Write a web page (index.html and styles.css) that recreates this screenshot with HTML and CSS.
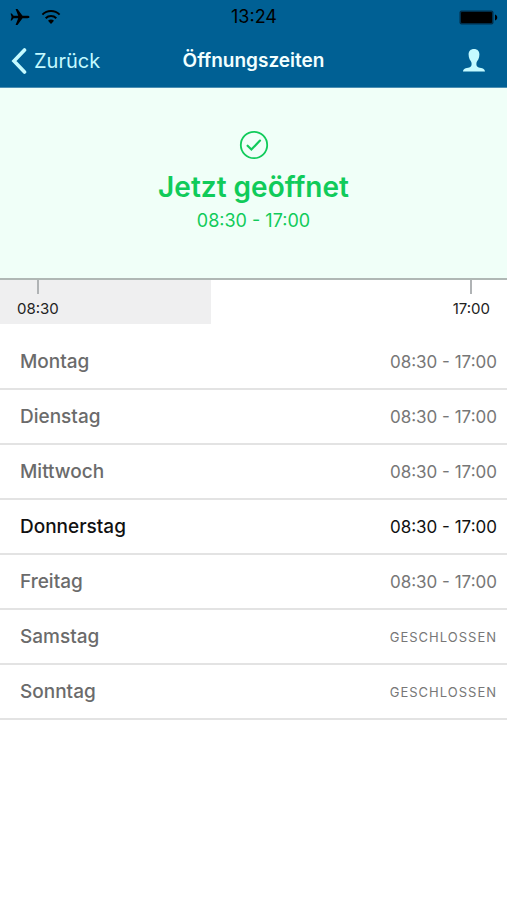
FILE: index.html
```html
<!DOCTYPE html>
<html lang="de">
<head>
<meta charset="utf-8">
<meta name="viewport" content="width=device-width, initial-scale=1">
<title>Öffnungszeiten</title>
<link rel="stylesheet" href="styles.css">
</head>
<body>
<header class="header">
  <div class="status">
    <div class="status-left">
      <svg width="20" height="18" viewBox="0 0 20 18" aria-hidden="true"><path d="M19.5 9c0-.8-1-1.200-2-1.200h-5L7.500 1H5.600l2.600 6.800H3.600L1.800 5.500H.6L1.600 9 .6 12.500h1.200l1.800-2.300h4.600L5.600 17h1.900l5-6.800h5c1 0 2-.4 2-1.200z"/></svg>
      <svg width="20" height="16" viewBox="0 0 20 16" aria-hidden="true"><g fill="none" stroke="#000" stroke-width="2"><path d="M1.400 5.600a12.200 12.200 0 0 1 17.200 0"/><path d="M4.700 9.200a7.500 7.500 0 0 1 10.600 0"/></g><path d="M10 15l-3-3.200a4.200 4.200 0 0 1 6 0z"/></svg>
    </div>
    <time class="clock">13:24</time>
    <svg class="battery" width="39" height="15" viewBox="0 0 39 15" aria-hidden="true"><rect x=".5" y=".5" width="34" height="14" rx="2" fill="#002d49"/><rect x="2" y="2" width="31" height="11" rx="1"/><path d="M36 4.500c3 1 3 5 0 6z"/></svg>
  </div>
  <nav class="nav">
    <a class="back" href="#">
      <svg width="16" height="26" viewBox="0 0 16 26" aria-hidden="true"><path d="M13.500 2L3 13l10.500 11" fill="none" stroke="currentColor" stroke-width="3.600" stroke-linecap="round" stroke-linejoin="miter"/></svg>
      <span>Zurück</span>
    </a>
    <h1 class="title">Öffnungszeiten</h1>
    <button class="profile" type="button" aria-label="Profil">
      <svg width="22" height="23" viewBox="0 0 22 23" aria-hidden="true"><path d="M11 0C7.600 0 5.600 2.200 5.600 5.500c0 1.800.4 3.300 1 4.800.4 1.100 1.600 2 1.900 3.400.3 1.800.1 3.400-1.300 4.200C5 19.100 0 18.800 0 22.500h22c0-3.700-5-3.400-7.200-4.600-1.400-.8-1.600-2.400-1.300-4.200.3-1.400 1.500-2.300 1.900-3.400.6-1.500 1-3 1-4.800C16.400 2.200 14.400 0 11 0z" fill="currentColor"/></svg>
    </button>
  </nav>
</header>
<main>
  <section class="hero">
    <svg width="30" height="30" viewBox="0 0 30 30" fill="none" stroke="currentColor" aria-hidden="true"><circle cx="15" cy="15" r="13.200" stroke-width="1.800"/><path d="M8.600 15.700l3.800 3.800 8.600-8.900" stroke-width="2.200" stroke-linecap="round"/></svg>
    <h2 class="hero-title">Jetzt geöffnet</h2>
    <p class="hero-time">08:30 - 17:00</p>
  </section>
  <section class="timeline" aria-label="Tagesverlauf">
    <div class="elapsed"><time class="mark">08:30</time></div>
    <div class="remaining"><time class="mark">17:00</time></div>
  </section>
  <ul class="days">
    <li class="day"><span class="name">Montag</span><span class="hours">08:30 - 17:00</span></li>
    <li class="day"><span class="name">Dienstag</span><span class="hours">08:30 - 17:00</span></li>
    <li class="day"><span class="name">Mittwoch</span><span class="hours">08:30 - 17:00</span></li>
    <li class="day today"><span class="name">Donnerstag</span><span class="hours">08:30 - 17:00</span></li>
    <li class="day"><span class="name">Freitag</span><span class="hours">08:30 - 17:00</span></li>
    <li class="day"><span class="name">Samstag</span><span class="closed">GESCHLOSSEN</span></li>
    <li class="day"><span class="name">Sonntag</span><span class="closed">GESCHLOSSEN</span></li>
  </ul>
</main>
</body>
</html>
```
FILE: styles.css
```css
* { box-sizing: border-box; margin: 0; padding: 0; }

body {
  background: #fff;
  color: #000;
  font-family: Inter, "Liberation Sans", sans-serif;
}

svg { display: block; }

.header {
  background: #006094;
  border-bottom: 1px solid #4c8fb3;
}

.status,
.nav {
  display: grid;
  grid-template-columns: 1fr auto 1fr;
  align-items: center;
}

.status { height: 34px; padding: 0 9px 0 10px; }
.status-left { display: flex; align-items: center; gap: 11px; }
.clock { font-size: 18px; line-height: 24px; }
.battery { justify-self: end; }

.nav { height: 53px; padding: 0 11px; }

.back {
  display: flex;
  align-items: center;
  gap: 7px;
  color: #c4faff;
  font-size: 20px;
  line-height: 24px;
  text-decoration: none;
}

.title {
  color: #f2ffff;
  font-size: 19px;
  font-weight: 600;
  line-height: 24px;
}

.profile {
  justify-self: end;
  padding: 0 11px;
  background: none;
  border: 0;
  color: #c4faff;
}

.hero {
  display: flex;
  flex-direction: column;
  align-items: center;
  padding: 42px 16px 45px;
  background: #f0fff8;
  border-bottom: 2px solid #b0b8b5;
  color: #10cb5a;
}

.hero-title {
  margin-top: 10px;
  font-size: 28px;
  font-weight: 600;
  line-height: 34px;
}

.hero-time {
  margin-top: 5px;
  font-size: 18px;
  line-height: 24px;
}

.timeline {
  display: grid;
  grid-template-columns: 5fr 7fr;
  height: 44px;
}

.elapsed,
.remaining {
  display: flex;
  align-items: flex-start;
  padding: 0 17px;
}

.elapsed { background: #efeff0; }
.remaining { justify-content: flex-end; }

.mark {
  display: flex;
  flex-direction: column;
  align-items: center;
  gap: 5px;
  color: #222;
  font-size: 15px;
  line-height: 20px;
}

.mark::before {
  content: "";
  width: 2px;
  height: 14px;
  background: #b0b3b5;
}

.days { margin-top: 11px; list-style: none; }

.day {
  display: flex;
  align-items: center;
  justify-content: space-between;
  height: 55px;
  padding: 0 10px 0 20px;
  border-bottom: 2px solid #e3e3e3;
  color: #6b6b6b;
}

.name { font-size: 19px; font-weight: 500; line-height: 24px; }
.hours { font-size: 17px; line-height: 24px; color: #777; }
.closed { font-size: 13px; line-height: 20px; letter-spacing: 1px; color: #777; }
.today .name,
.today .hours { color: #111; }
```
